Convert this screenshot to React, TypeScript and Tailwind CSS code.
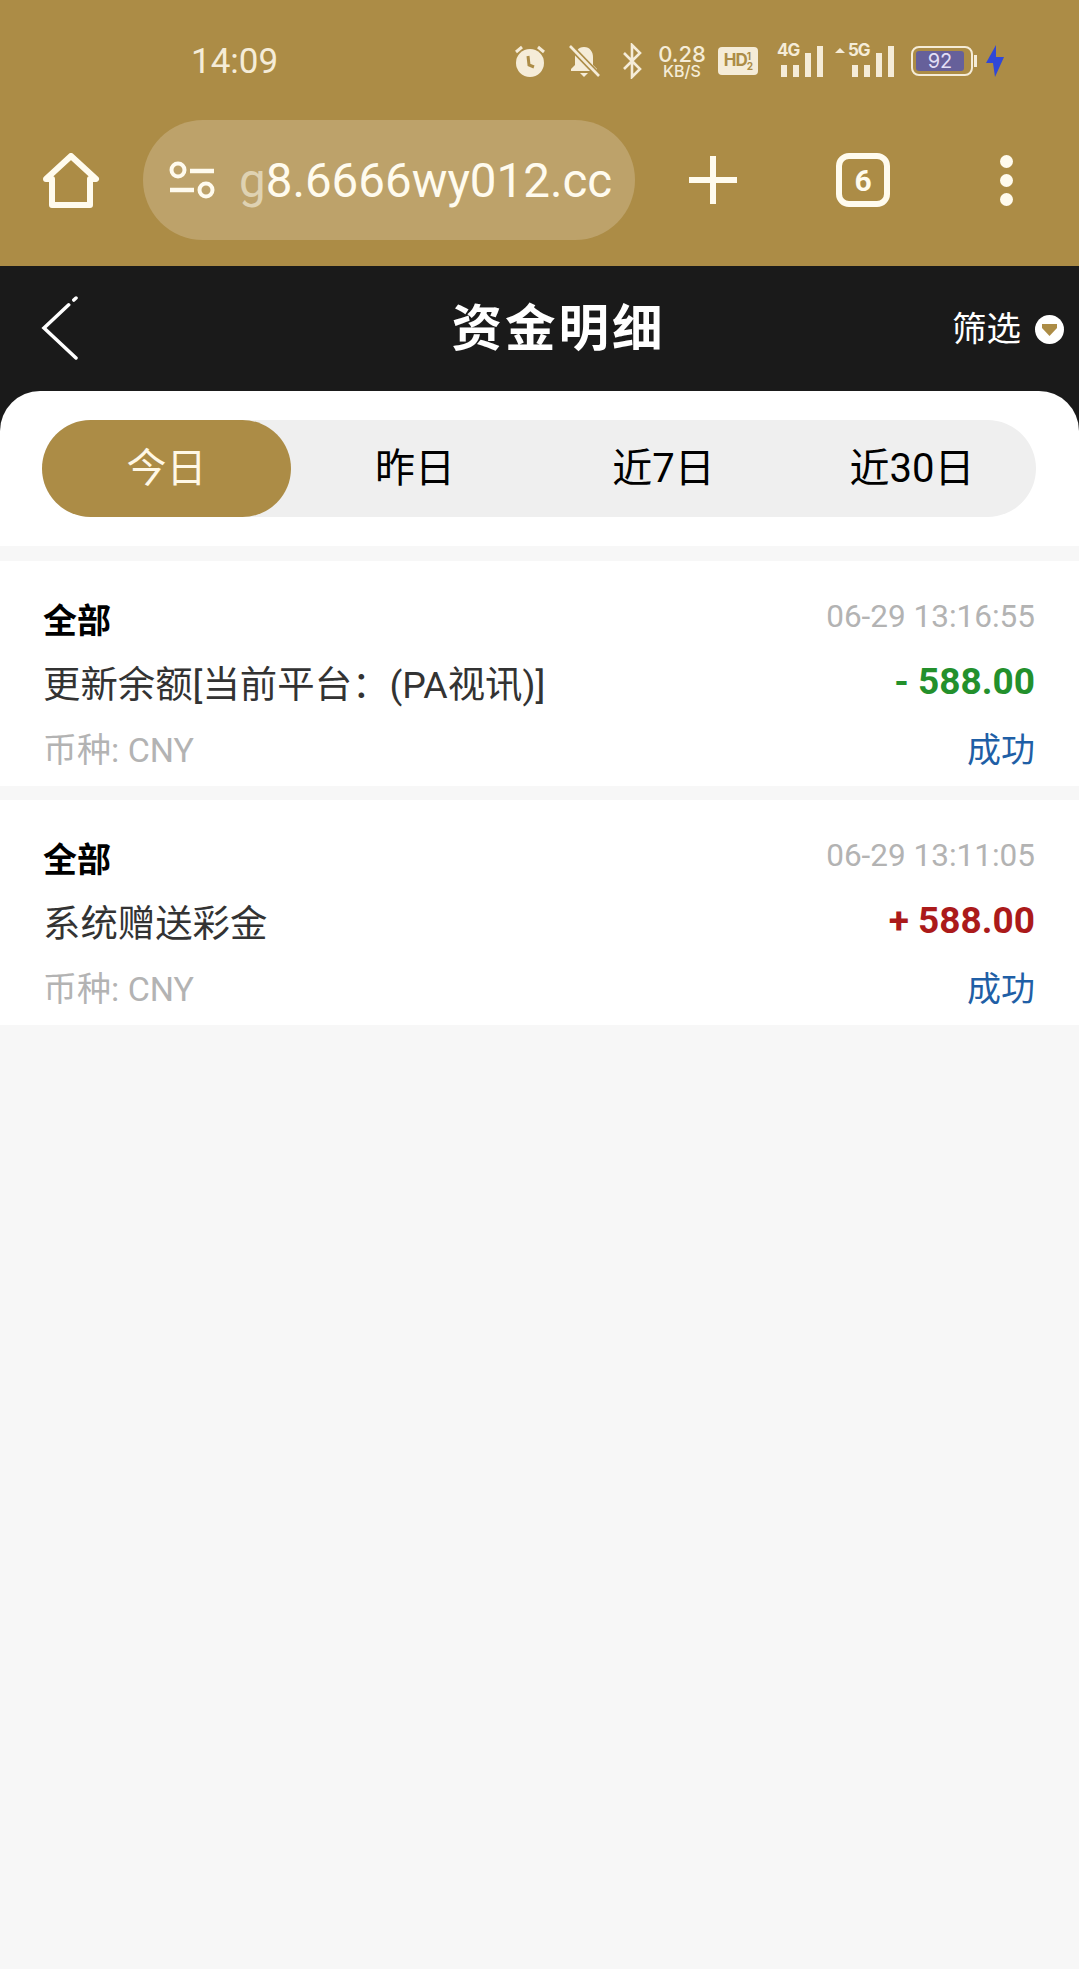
import React from "react";

const cjk = { fontFamily: 'Roboto, "Noto Sans CJK SC", sans-serif' };

function StatusIcons() {
  return (
    <div className="mt-[2px] flex items-center text-[#f5ecd8]">
      <svg width="34" height="36" viewBox="0 0 34 36" className="mr-[21px]">
        <circle cx="17" cy="20" r="14" fill="#f5ecd8" />
        <path d="M15 13l1 9 5 2" stroke="#ac8c46" strokeWidth="3" fill="none" />
        <path d="M3 9l6-5M31 9l-6-5" stroke="#f5ecd8" strokeWidth="3" />
      </svg>
      <svg width="32" height="34" viewBox="0 0 32 34" className="mr-[21px]">
        <path d="M16 3c-6 0-9 5-9 10v8l-4 4v2h26v-2l-4-4v-8c0-5-3-10-9-10z" fill="#f5ecd8" />
        <path d="M12 29h8l-4 4z" fill="#f5ecd8" />
        <path d="M2 2l29 30" stroke="#ac8c46" strokeWidth="6" />
        <path d="M2 2l29 30" stroke="#f5ecd8" strokeWidth="2.6" />
      </svg>
      <svg width="22" height="36" viewBox="0 0 22 36" className="mr-[14px]">
        <path d="M3 10l16 16-8 8V2l8 8L3 26" stroke="#f5ecd8" strokeWidth="2.6" fill="none" />
      </svg>
      <div className="flex w-[50px] flex-col items-center font-medium" style={{ fontFamily: "Inter, sans-serif" }}>
        <span className="text-[22px] leading-[20px]">0.28</span>
        <span className="text-[16px] leading-[15px]">KB/S</span>
      </div>
      <div className="ml-[11px] flex h-[28px] w-[40px] items-center justify-center rounded-[4px] bg-[#f5ecd8] text-[17px] font-bold tracking-[-1px] text-[#ac8c46]" style={{ fontFamily: "Inter, sans-serif" }}>
        HD<span className="text-[10px] leading-[10px]">1<br />2</span>
      </div>
      <Signal label="4G" className="ml-[19px]" />
      <Signal label="5G" arrows className="ml-[12px]" />
      <div className="ml-[17px] flex items-center">
        <div className="flex h-[30px] w-[62px] items-center rounded-[8px] border-2 border-[#f5ecd8] p-[3px]">
          <div className="flex h-full w-[48px] items-center justify-center rounded-[3px] bg-[#66609a] text-[20px] text-[#e2dff5]" style={{ fontFamily: "Inter, sans-serif" }}>
            92
          </div>
        </div>
        <div className="ml-[1px] h-[12px] w-[3px] bg-[#f5ecd8]" />
      </div>
      <svg width="20" height="34" viewBox="0 0 20 34" className="ml-[8px]">
        <path d="M11 1L1 19h7l2 14 9-20h-8z" fill="#3048d8" />
      </svg>
    </div>
  );
}

function Signal({ label, arrows, className }: { label: string; arrows?: boolean; className?: string }) {
  return (
    <div className={`flex items-end ${className}`}>
      <div className={`relative flex h-[32px] items-end gap-[6px] ${arrows ? "pl-[17px]" : "pl-[4px]"}`}>
        <div className="absolute -top-[2px] left-0 flex items-center text-[17px] font-bold leading-[15px] tracking-[-1px]" style={{ fontFamily: "Inter, sans-serif" }}>
          {arrows && <span className="mr-[3px] h-0 w-0 border-x-[5px] border-b-[5px] border-x-transparent border-b-[#f5ecd8]" />}
          {label}
        </div>
        <div className="h-[12px] w-[6px] bg-[#f5ecd8]" />
        <div className="h-[12px] w-[6px] bg-[#f5ecd8]" />
        <div className="h-[24px] w-[6px] bg-[#f5ecd8]" />
        <div className="h-[31px] w-[6px] bg-[#f5ecd8]" />
      </div>
    </div>
  );
}

function Record({ title, time, amount, color }: { title: string; time: string; amount: string; color: string }) {
  return (
    <div className="flex h-[225px] flex-col bg-white pl-[43px] pr-[44px] pt-[40px]">
      <div className="flex h-[40px] items-center justify-between">
        <span className="text-[34px] font-bold text-black">全部</span>
        <span className="-mt-[8px] text-[31.5px] text-[#b3b3b3]">{time}</span>
      </div>
      <div className="mt-[24px] flex h-[40px] items-center justify-between">
        <span className="text-[37.4px] text-[#333333]">{title}</span>
        <span className={`-mt-[6px] text-[37px] font-bold ${color}`}>{amount}</span>
      </div>
      <div className="mt-[25px] flex h-[40px] items-center justify-between">
        <span className="text-[34px] text-[#b3b3b3]">币种: CNY</span>
        <span className="text-[34px] text-[#1f5fa6]">成功</span>
      </div>
    </div>
  );
}

export default function App() {
  return (
    <div className="flex min-h-[1969px] w-[1079px] flex-col bg-[#f7f7f7]" style={cjk}>
      <div className="h-[266px] bg-[#ac8c46] px-[43px]">
        <div className="flex h-[120px] items-center justify-between pl-[148px] pr-[31px]">
          <span className="mt-[5px] text-[35px] text-[#f5ecd8]">14:09</span>
          <StatusIcons />
        </div>
        <div className="flex items-center">
          <svg width="58" height="56" viewBox="0 0 58 56" className="-ml-[1px] mt-[2px]">
            <path d="M4 26L29 3l25 23h-6v26H10V26z" fill="none" stroke="#fffbee" strokeWidth="6" strokeLinejoin="round" />
          </svg>
          <div className="ml-[43px] flex h-[120px] w-[492px] items-center overflow-hidden rounded-[60px] bg-[#bda26a] pl-[26px]">
            <svg width="46" height="38" viewBox="0 0 46 38" className="shrink-0">
              <circle cx="9" cy="9" r="6.5" fill="none" stroke="#fffbee" strokeWidth="4" />
              <path d="M21 10h24M1 29h24" stroke="#fffbee" strokeWidth="4.5" />
              <circle cx="37" cy="29" r="6.5" fill="none" stroke="#fffbee" strokeWidth="4" />
            </svg>
            <span className="ml-[24px] mt-[3px] whitespace-nowrap text-[47.5px] text-[#fffbee]">
              <span className="text-[#dfd2b2]">g</span>8.6666wy012.cc
            </span>
          </div>
          <svg width="48" height="48" viewBox="0 0 48 48" className="ml-[54px]">
            <path d="M24 0v48M0 24h48" stroke="#fffbee" strokeWidth="6" strokeLinecap="round" />
          </svg>
          <div className="ml-[99px] flex h-[54px] w-[54px] items-center justify-center rounded-[13px] border-[6px] border-[#fffbee] text-[30px] font-bold text-[#fffbee]">
            6
          </div>
          <div className="ml-[110px] flex flex-col gap-[6px]">
            <div className="h-[13px] w-[13px] rounded-full bg-[#fffbee]" />
            <div className="h-[13px] w-[13px] rounded-full bg-[#fffbee]" />
            <div className="h-[13px] w-[13px] rounded-full bg-[#fffbee]" />
          </div>
        </div>
      </div>

      <div className="bg-[#1a1a1a]">
        <div className="relative flex h-[125px] items-center justify-center">
          <svg width="40" height="64" viewBox="0 0 40 64" className="absolute left-[40px] top-[30px]">
            <path d="M36 2L4 32l32 30" fill="none" stroke="#ffffff" strokeWidth="3.5" strokeLinecap="round" strokeDasharray="3 7 90" />
          </svg>
          <span className="ml-[38px] mt-[1px] text-[50.5px] font-bold tracking-[3px] text-white">资金明细</span>
          <div className="absolute right-[15px] top-[38px] flex items-center">
            <span className="text-[34.5px] text-white">筛选</span>
            <div className="ml-[14px] flex h-[29px] w-[29px] items-center justify-center rounded-full bg-white">
              <svg width="15" height="13" viewBox="0 0 15 13">
                <path d="M0 1h15v4L7.5 13 0 5z" fill="#ac8c46" />
              </svg>
            </div>
          </div>
        </div>
        <div className="h-[155px] rounded-t-[40px] bg-white px-[42px] pt-[29px]">
          <div className="flex h-[97px] w-[994px] items-center rounded-[49px] bg-[#efefef]">
            <div className="flex h-full w-[249px] items-center justify-center rounded-[49px] bg-[#ac8c46] text-[40px] text-[#fff8e6]">今日</div>
            <div className="flex h-full w-[248px] items-center justify-center text-[40px] text-black">昨日</div>
            <div className="flex h-full w-[249px] items-center justify-center text-[40px] text-black">近7日</div>
            <div className="flex h-full w-[248px] items-center justify-center text-[40px] text-black">近30日</div>
          </div>
        </div>
      </div>

      <div className="mt-[15px] flex flex-col gap-[14px]">
        <Record title="更新余额[当前平台：(PA视讯)]" time="06-29 13:16:55" amount="- 588.00" color="text-[#23902c]" />
        <Record title="系统赠送彩金" time="06-29 13:11:05" amount="+ 588.00" color="text-[#ab1a1a]" />
      </div>
    </div>
  );
}
